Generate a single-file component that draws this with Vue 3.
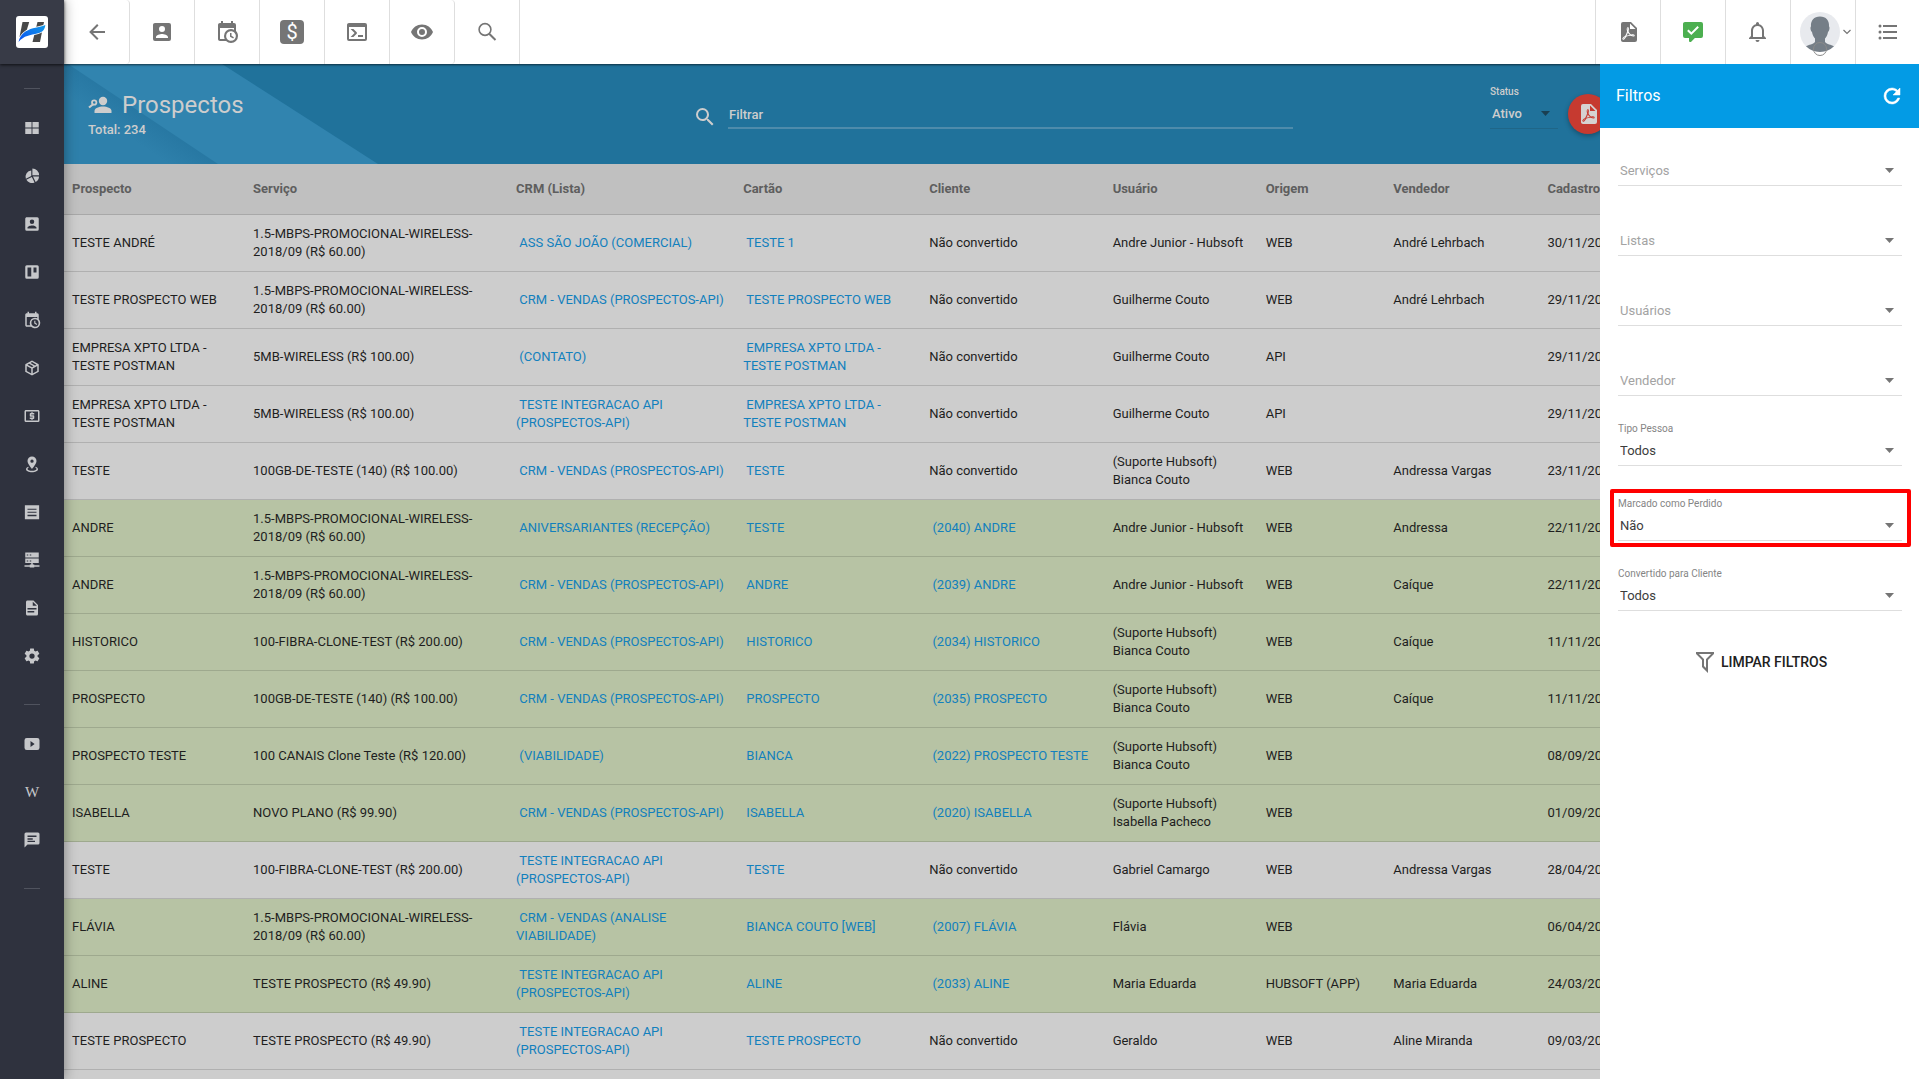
<script setup>
const icons = {
  back: 'M20,11V13H8L13.5,18.5L12.08,19.92L4.16,12L12.08,4.08L13.5,5.5L8,11H20Z',
  contact: 'M6,17C6,15 10,13.9 12,13.9C14,13.9 18,15 18,17V18H6M15,9A3,3 0 0,1 12,12A3,3 0 0,1 9,9A3,3 0 0,1 12,6A3,3 0 0,1 15,9M3,5V19A2,2 0 0,0 5,21H19A2,2 0 0,0 21,19V5A2,2 0 0,0 19,3H5C3.89,3 3,3.9 3,5Z',
  schedule: 'M15,13H16.5V15.82L18.94,17.23L18.19,18.53L15,16.69V13M19,8H5V19H9.67C9.24,18.09 9,17.07 9,16A7,7 0 0,1 16,9C17.07,9 18.09,9.24 19,9.67V8M5,21C3.89,21 3,20.1 3,19V5C3,3.89 3.89,3 5,3H6V1H8V3H16V1H18V3H19A2,2 0 0,1 21,5V11.1C22.24,12.36 23,14.09 23,16A7,7 0 0,1 16,23C14.09,23 12.36,22.24 11.1,21H5M16,11.15A4.85,4.85 0 0,0 11.15,16C11.15,18.68 13.32,20.85 16,20.85A4.85,4.85 0 0,0 20.85,16C20.85,13.32 18.68,11.15 16,11.15Z',
  console: 'M20,19V7H4V19H20M20,3A2,2 0 0,1 22,5V19A2,2 0 0,1 20,21H4A2,2 0 0,1 2,19V5C2,3.89 2.9,3 4,3H20M13,17V15H18V17H13M9.58,13L5.57,9H8.4L11.7,12.3C12.09,12.69 12.09,13.33 11.7,13.72L8.42,17H5.59L9.58,13Z',
  eye: 'M12,9A3,3 0 0,0 9,12A3,3 0 0,0 12,15A3,3 0 0,0 15,12A3,3 0 0,0 12,9M12,17A5,5 0 0,1 7,12A5,5 0 0,1 12,7A5,5 0 0,1 17,12A5,5 0 0,1 12,17M12,4.5C7,4.5 2.73,7.61 1,12C2.73,16.39 7,19.5 12,19.5C17,19.5 21.27,16.39 23,12C21.27,7.61 17,4.5 12,4.5Z',
  search: 'M9.5,3A6.5,6.5 0 0,1 16,9.5C16,11.11 15.41,12.59 14.44,13.73L14.71,14H15.5L20.5,19L19,20.5L14,15.5V14.71L13.73,14.44C12.59,15.41 11.11,16 9.5,16A6.5,6.5 0 0,1 3,9.5A6.5,6.5 0 0,1 9.5,3M9.5,5C7,5 5,7 5,9.5C5,12 7,14 9.5,14C12,14 14,12 14,9.5C14,7 12,5 9.5,5Z',
  pdf: 'M14,9H19.5L14,3.5V9M7,2H15L21,8V20A2,2 0 0,1 19,22H7C5.89,22 5,21.1 5,20V4A2,2 0 0,1 7,2M11.93,12.44C12.34,13.34 12.86,14.08 13.46,14.59L13.87,14.91C13,15.07 11.8,15.35 10.53,15.84V15.84L10.42,15.88L10.92,14.84C11.37,13.97 11.7,13.18 11.93,12.44M18.41,16.25C18.59,16.07 18.68,15.84 18.69,15.59C18.72,15.39 18.67,15.2 18.57,15.04C18.28,14.57 17.53,14.35 16.29,14.35L15,14.42L14.13,13.84C13.5,13.32 12.93,12.41 12.53,11.28L12.57,11.14C12.9,9.81 13.21,8.2 12.55,7.54C12.39,7.38 12.17,7.3 11.94,7.3H11.7C11.33,7.3 11,7.69 10.91,8.07C10.54,9.4 10.76,10.13 11.13,11.34V11.35C10.88,12.23 10.56,13.25 10.05,14.28L9.09,16.08L8.2,16.57C7,17.32 6.43,18.16 6.32,18.69C6.28,18.88 6.3,19.05 6.37,19.23L6.4,19.28L6.88,19.59L7.32,19.7C8.13,19.7 9.05,18.75 10.29,16.63L10.47,16.56C11.5,16.23 12.78,16 14.5,15.81C15.53,16.32 16.74,16.55 17.5,16.55C17.94,16.55 18.24,16.44 18.41,16.25M18,15.54L18.09,15.65C18.08,15.75 18.05,15.76 18,15.78H17.96L17.77,15.8C17.31,15.8 16.6,15.61 15.87,15.29C15.96,15.19 16,15.19 16.1,15.19C17.5,15.19 17.9,15.44 18,15.54M8.83,17C8.18,18.19 7.59,18.85 7.14,19C7.19,18.62 7.64,17.96 8.35,17.31L8.83,17M11.85,10.09C11.62,9.19 11.61,8.46 11.78,8.04L11.85,7.92L12,7.97C12.17,8.21 12.19,8.53 12.09,9.07L12.06,9.23L11.9,10.05L11.85,10.09Z',
  bell: 'M16,17H7V10.5C7,8 9,6 11.5,6C14,6 16,8 16,10.5M18,16V10.5C18,7.43 15.86,4.86 13,4.18V3.5A1.5,1.5 0 0,0 11.5,2A1.5,1.5 0 0,0 10,3.5V4.18C7.13,4.86 5,7.43 5,10.5V16L3,18V19H20V18M11.5,22A2,2 0 0,0 13.5,20H9.5A2,2 0 0,0 11.5,22Z',
  list: 'M7,5H21V7H7V5M7,13V11H21V13H7M4,4.5A1.5,1.5 0 0,1 5.5,6A1.5,1.5 0 0,1 4,7.5A1.5,1.5 0 0,1 2.5,6A1.5,1.5 0 0,1 4,4.5M4,10.5A1.5,1.5 0 0,1 5.5,12A1.5,1.5 0 0,1 4,13.5A1.5,1.5 0 0,1 2.5,12A1.5,1.5 0 0,1 4,10.5M7,19V17H21V19H7M4,16.5A1.5,1.5 0 0,1 5.5,18A1.5,1.5 0 0,1 4,19.5A1.5,1.5 0 0,1 2.5,18A1.5,1.5 0 0,1 4,16.5Z',
  refresh: 'M17.65,6.35C16.2,4.9 14.21,4 12,4A8,8 0 0,0 4,12A8,8 0 0,0 12,20C15.73,20 18.84,17.45 19.73,14H17.65C16.83,16.33 14.61,18 12,18A6,6 0 0,1 6,12A6,6 0 0,1 12,6C13.66,6 15.14,6.69 16.22,7.78L13,11H20V4L17.65,6.35Z',
  filter: 'M3,2H21V4H20.92L15,9.92V22.91L9,16.91V9.91L3.09,4H3V2M11,16.08L13,18.08V9H13.09L18.09,4H5.92L10.92,9H11V16.08Z',
  comment: 'M9,22A1,1 0 0,1 8,21V18H4A2,2 0 0,1 2,16V4C2,2.89 2.9,2 4,2H20A2,2 0 0,1 22,4V16A2,2 0 0,1 20,18H13.9L10.2,21.71C10,21.9 9.75,22 9.5,22V22H9Z',
  grid: 'M3,4H11.4V11.4H3ZM12.6,4H21V11.4H12.6ZM3,12.6H11.4V20H3ZM12.6,12.6H21V20H12.6Z',
  chart: 'M12.5,2A9,9 0 0,1 21.5,11H12.5ZM11,4.5V12L3.8,15.5A8.5,8.5 0 0,1 11,4.5ZM4.5,17L11.8,13.4L15.4,20.6A8.5,8.5 0 0,1 4.5,17ZM13.3,12.5H21.3A8.5,8.5 0 0,1 16.8,20Z',
  board: 'M5,3H19A2,2 0 0,1 21,5V19A2,2 0 0,1 19,21H5A2,2 0 0,1 3,19V5A2,2 0 0,1 5,3M6,6V18H11V6H6M14,6V12.5H18V6H14Z',
  box: 'M21,16.5C21,16.88 20.79,17.21 20.47,17.38L12.57,21.82C12.41,21.94 12.21,22 12,22C11.79,22 11.59,21.94 11.43,21.82L3.53,17.38C3.21,17.21 3,16.88 3,16.5V7.5C3,7.12 3.21,6.79 3.53,6.62L11.43,2.18C11.59,2.06 11.79,2 12,2C12.21,2 12.41,2.06 12.57,2.18L20.47,6.62C20.79,6.79 21,7.12 21,7.5V16.5M12,4.15L10.11,5.22L16,8.61L17.96,7.5L12,4.15M6.04,7.5L12,10.85L13.96,9.75L8.08,6.35L6.04,7.5M5,15.91L11,19.29V12.58L5,9.21V15.91M19,15.91V9.21L13,12.58V19.29L19,15.91Z',
  cash: 'M20,18H4V6H20M20,4H4C2.89,4 2,4.89 2,6V18A2,2 0 0,0 4,20H20A2,2 0 0,0 22,18V6C22,4.89 21.1,4 20,4M11,17H13V16H14A1,1 0 0,0 15,15V12A1,1 0 0,0 14,11H11V10H15V8H13V7H11V8H10A1,1 0 0,0 9,9V12A1,1 0 0,0 10,13H13V14H9V16H11V17Z',
  pin: 'M12,2A6,6 0 0,1 18,8C18,12 12,18.5 12,18.5C12,18.5 6,12 6,8A6,6 0 0,1 12,2M12,6A2.2,2.2 0 1,0 12,10.4A2.2,2.2 0 1,0 12,6M20,19C20,21.2 16.4,23 12,23C7.6,23 4,21.2 4,19C4,17.7 5.2,16.6 7.1,15.8L7.7,16.7C6.7,17.2 6,17.8 6,18.5C6,19.9 8.7,21 12,21C15.3,21 18,19.9 18,18.5C18,17.8 17.3,17.2 16.3,16.7L16.9,15.8C18.8,16.6 20,17.7 20,19Z',
  note: 'M2.5,3H21.5V21.5H2.5ZM6,7.5V9H18V7.5ZM6,11.5V13H18V11.5ZM6,15.5V17.5H18V15.5Z',
  server: 'M3,2H21V8.5H3ZM5,4.5V6H7V4.5ZM9,4.5V6H11V4.5ZM3,10H21V16H3ZM5,12.5V14H7V12.5ZM9,12.5V14H11V12.5ZM11,16H13V18H15V19H22V21H15V22H9V21H2V19H9V18H11Z',
  file: 'M13,9H18.5L13,3.5V9M6,2H14L20,8V20A2,2 0 0,1 18,22H6C4.89,22 4,21.1 4,20V4C4,2.89 4.89,2 6,2M15,18V16H6V18H15M18,14V12H6V14H18Z',
  cog: 'M12,15.5A3.5,3.5 0 0,1 8.5,12A3.5,3.5 0 0,1 12,8.5A3.5,3.5 0 0,1 15.5,12A3.5,3.5 0 0,1 12,15.5M19.43,12.97C19.47,12.65 19.5,12.33 19.5,12C19.5,11.67 19.47,11.34 19.43,11L21.54,9.37C21.73,9.22 21.78,8.95 21.66,8.73L19.66,5.27C19.54,5.05 19.27,4.96 19.05,5.05L16.56,6.05C16.04,5.66 15.5,5.32 14.87,5.07L14.5,2.42C14.46,2.18 14.25,2 14,2H10C9.75,2 9.54,2.18 9.5,2.42L9.13,5.07C8.5,5.32 7.96,5.66 7.44,6.05L4.95,5.05C4.73,4.96 4.46,5.05 4.34,5.27L2.34,8.73C2.21,8.95 2.27,9.22 2.46,9.37L4.57,11C4.53,11.34 4.5,11.67 4.5,12C4.5,12.33 4.53,12.65 4.57,12.97L2.46,14.63C2.27,14.78 2.21,15.05 2.34,15.27L4.34,18.73C4.46,18.95 4.73,19.03 4.95,18.95L7.44,17.94C7.96,18.34 8.5,18.68 9.13,18.93L9.5,21.58C9.54,21.82 9.75,22 10,22H14C14.25,22 14.46,21.82 14.5,21.58L14.87,18.93C15.5,18.67 16.04,18.34 16.56,17.94L19.05,18.95C19.27,19.03 19.54,18.95 19.66,18.73L21.66,15.27C21.78,15.05 21.73,14.78 21.54,14.63L19.43,12.97Z',
  video: 'M5,4H19A3,3 0 0,1 22,7V17A3,3 0 0,1 19,20H5A3,3 0 0,1 2,17V7A3,3 0 0,1 5,4M10,8V16L15.5,12Z',
  chat: 'M4,2H20A2,2 0 0,1 22,4V16A2,2 0 0,1 20,18H6L2,22V4A2,2 0 0,1 4,2M6,6V8H18V6ZM6,9.5V11.5H13V9.5ZM6,13V14.5H16V13Z'
}

const menuMain = [
  ['Painel', 'grid'], ['Relatórios', 'chart'], ['Clientes', 'contact'], ['CRM', 'board'],
  ['Agenda', 'schedule'], ['Estoque', 'box'], ['Financeiro', 'cash'], ['Mapa', 'pin'],
  ['Fiscal', 'note'], ['Rede', 'server'], ['Documentos', 'file'], ['Configurações', 'cog']
]

const columns = ['Prospecto', 'Serviço', 'CRM (Lista)', 'Cartão', 'Cliente', 'Usuário', 'Origem', 'Vendedor', 'Cadastro']

const mbps = '1.5-MBPS-PROMOCIONAL-WIRELESS-2018/09 (R$ 60.00)'
const api = 'CRM - VENDAS (PROSPECTOS-API)'
const integ = 'TESTE INTEGRACAO API (PROSPECTOS-API)'
const none = 'Não convertido'
const bianca = '(Suporte Hubsoft) Bianca Couto'
const empresa = 'EMPRESA XPTO LTDA - TESTE POSTMAN'

const rows = [
  ['TESTE ANDRÉ', mbps, 'ASS SÃO JOÃO (COMERCIAL)', 'TESTE 1', none, 'Andre Junior - Hubsoft', 'WEB', 'André Lehrbach', '30/11/2022'],
  ['TESTE PROSPECTO WEB', mbps, api, 'TESTE PROSPECTO WEB', none, 'Guilherme Couto', 'WEB', 'André Lehrbach', '29/11/2022'],
  [empresa, '5MB-WIRELESS (R$ 100.00)', '(CONTATO)', empresa, none, 'Guilherme Couto', 'API', '', '29/11/2022'],
  [empresa, '5MB-WIRELESS (R$ 100.00)', integ, empresa, none, 'Guilherme Couto', 'API', '', '29/11/2022'],
  ['TESTE', '100GB-DE-TESTE (140) (R$ 100.00)', api, 'TESTE', none, bianca, 'WEB', 'Andressa Vargas', '23/11/2022'],
  ['ANDRE', mbps, 'ANIVERSARIANTES (RECEPÇÃO)', 'TESTE', '(2040) ANDRE', 'Andre Junior - Hubsoft', 'WEB', 'Andressa', '22/11/2022'],
  ['ANDRE', mbps, api, 'ANDRE', '(2039) ANDRE', 'Andre Junior - Hubsoft', 'WEB', 'Caíque', '22/11/2022'],
  ['HISTORICO', '100-FIBRA-CLONE-TEST (R$ 200.00)', api, 'HISTORICO', '(2034) HISTORICO', bianca, 'WEB', 'Caíque', '11/11/2022'],
  ['PROSPECTO', '100GB-DE-TESTE (140) (R$ 100.00)', api, 'PROSPECTO', '(2035) PROSPECTO', bianca, 'WEB', 'Caíque', '11/11/2022'],
  ['PROSPECTO TESTE', '100 CANAIS Clone Teste (R$ 120.00)', '(VIABILIDADE)', 'BIANCA', '(2022) PROSPECTO TESTE', bianca, 'WEB', '', '08/09/2022'],
  ['ISABELLA', 'NOVO PLANO (R$ 99.90)', api, 'ISABELLA', '(2020) ISABELLA', '(Suporte Hubsoft) Isabella Pacheco', 'WEB', '', '01/09/2022'],
  ['TESTE', '100-FIBRA-CLONE-TEST (R$ 200.00)', integ, 'TESTE', none, 'Gabriel Camargo', 'WEB', 'Andressa Vargas', '28/04/2022'],
  ['FLÁVIA', mbps, 'CRM - VENDAS (ANALISE VIABILIDADE)', 'BIANCA COUTO [WEB]', '(2007) FLÁVIA', 'Flávia', 'WEB', '', '06/04/2022'],
  ['ALINE', 'TESTE PROSPECTO (R$ 49.90)', integ, 'ALINE', '(2033) ALINE', 'Maria Eduarda', 'HUBSOFT (APP)', 'Maria Eduarda', '24/03/2022'],
  ['TESTE PROSPECTO', 'TESTE PROSPECTO (R$ 49.90)', integ, 'TESTE PROSPECTO', none, 'Geraldo', 'WEB', 'Aline Miranda', '09/03/2022'],
  ['', '', '', '', '', '', '', '', '']
]

const converted = (row) => row[4].startsWith('(')
const isLink = (row, i) => row[i] && (i === 2 || i === 3 || (i === 4 && converted(row)))

const filters = [
  { id: 'servicos', hint: 'Serviços' },
  { id: 'listas', hint: 'Listas' },
  { id: 'usuarios', hint: 'Usuários' },
  { id: 'vendedor', hint: 'Vendedor' },
  { id: 'pessoa', label: 'Tipo Pessoa', value: 'Todos' },
  { id: 'perdido', label: 'Marcado como Perdido', value: 'Não', marked: true },
  { id: 'convertido', label: 'Convertido para Cliente', value: 'Todos' }
]
</script>

<template>
  <div class="app">
    <aside class="rail">
      <a class="logo" href="#" aria-label="Início">
        <svg width="32" height="32" viewBox="0 0 32 32">
          <defs>
            <linearGradient id="swoosh" x1="0" y1="1" x2="1" y2="0">
              <stop offset="0" stop-color="#0a4ff0" />
              <stop offset="1" stop-color="#129ae8" />
            </linearGradient>
          </defs>
          <rect width="32" height="32" rx="3" fill="#fff" />
          <path d="M6.500 6H13.200L10.500 15L3.500 21Z" fill="#484848" />
          <path d="M21.500 6H28L24 26H16.500Z" fill="#484848" />
          <path d="M2.500 26C4.500 17.500 10 14.500 17 12.300C22 10.800 26 10.800 29.300 9C29 13 27 16 22 17.300C14 19.300 8 19.500 2.500 26Z" fill="#fff" stroke="#fff" stroke-width="1.500" />
          <path d="M2.500 26C4.500 17.500 10 14.500 17 12.300C22 10.800 26 10.800 29.300 9C29 13 27 16 22 17.300C14 19.300 8 19.500 2.500 26Z" fill="url(#swoosh)" />
        </svg>
      </a>
      <nav class="menu">
        <hr>
        <a v-for="[name, icon] in menuMain" :key="name" href="#" :aria-label="name">
          <svg width="18" height="18" viewBox="0 0 24 24"><path fill-rule="evenodd" :d="icons[icon]" /></svg>
        </a>
        <hr>
        <a href="#" aria-label="Vídeos"><svg width="18" height="18" viewBox="0 0 24 24"><path fill-rule="evenodd" :d="icons.video" /></svg></a>
        <a href="#" class="wiki">W</a>
        <a href="#" aria-label="Mensagens"><svg width="18" height="18" viewBox="0 0 24 24"><path fill-rule="evenodd" :d="icons.chat" /></svg></a>
        <hr>
      </nav>
    </aside>

    <header class="topbar">
      <button type="button" class="tool rounded" aria-label="Voltar"><svg width="24" height="24" viewBox="0 0 24 24"><path :d="icons.back" /></svg></button>
      <button type="button" class="tool" aria-label="Clientes"><svg width="24" height="24" viewBox="0 0 24 24"><path :d="icons.contact" /></svg></button>
      <button type="button" class="tool" aria-label="Agenda"><svg width="24" height="24" viewBox="0 0 24 24"><path :d="icons.schedule" /></svg></button>
      <button type="button" class="tool"><span class="money">$</span></button>
      <button type="button" class="tool" aria-label="Console"><svg width="24" height="24" viewBox="0 0 24 24"><path :d="icons.console" /></svg></button>
      <button type="button" class="tool rounded" aria-label="Visualizar"><svg width="24" height="24" viewBox="0 0 24 24"><path :d="icons.eye" /></svg></button>
      <button type="button" class="tool" aria-label="Pesquisar">
        <svg width="24" height="24" viewBox="0 0 24 24"><g fill="none" stroke="#757575" stroke-width="1.600"><circle cx="10" cy="9.500" r="5.900" /><path d="M14.200 13.800L20.500 20" stroke-width="2" /></g></svg>
      </button>
      <div class="tools-right">
        <button type="button" class="tool" aria-label="Relatório PDF"><svg width="24" height="24" viewBox="0 0 24 24"><path :d="icons.pdf" /></svg></button>
        <button type="button" class="tool" aria-label="Tarefas">
          <svg width="24" height="24" viewBox="0 0 24 24"><path fill="#4caf50" :d="icons.comment" /><path d="M6.800 10.300L10.300 13.600L17.200 6.800" fill="none" stroke="#fff" stroke-width="2" /></svg>
        </button>
        <button type="button" class="tool" aria-label="Notificações"><svg width="24" height="24" viewBox="0 0 24 24"><path :d="icons.bell" /></svg></button>
        <button type="button" class="tool user" aria-label="Usuário">
          <svg class="avatar" width="40" height="40" viewBox="0 0 40 40">
            <circle cx="20" cy="20" r="20" fill="#e8eaee" />
            <path d="M20 4.500C26 4.500 29.500 8.500 29 14.500C30 15 29.500 19 28 20C27.500 23 26.500 25 25 26.500V30C27 32.500 31 32.500 34 34.200A20 20 0 0 1 6 34.200C9 32.500 13 32.500 15 30V26.500C13.500 25 12.500 23 12 20C10.500 19 10 15 11 14.500C10.500 8.500 14 4.500 20 4.500Z" fill="#757e87" />
            <path d="M14.500 40H25.500A6 6 0 0 1 14.500 40Z" fill="#fff" />
            <circle cx="20" cy="37" r="6.500" fill="none" stroke="#8a8a8a" />
          </svg>
          <svg width="8" height="6" viewBox="0 0 8 6"><path d="M0.500 1L4 4.500L7.500 1" fill="none" stroke="#757575" stroke-width="1.200" /></svg>
        </button>
        <button type="button" class="tool last" aria-label="Painel rápido"><svg width="24" height="24" viewBox="0 0 24 24"><path :d="icons.list" /></svg></button>
      </div>
    </header>

    <main class="content">
      <section class="banner">
        <svg class="rays" width="340" height="100" viewBox="0 0 340 100" aria-hidden="true">
          <defs>
            <linearGradient id="low" gradientUnits="userSpaceOnUse" x1="60" y1="70" x2="79" y2="42">
              <stop offset="0" stop-color="#2e80ab" />
              <stop offset="1" stop-color="#2676a1" />
            </linearGradient>
          </defs>
          <path d="M0 0H158L314 100H0Z" fill="#3184af" />
          <path d="M0 0H4L154 100H0Z" fill="url(#low)" />
        </svg>
        <div class="heading">
          <h1>
            <svg width="24" height="24" viewBox="0 0 24 24" fill="#cdcdcd">
              <circle cx="15" cy="8" r="4.200" />
              <path d="M6.500 20V18C6.500 15 11 13.500 15 13.500S23.500 15 23.500 18V20Z" />
              <path d="M1 14.500L5.500 11" stroke="#cdcdcd" stroke-width="2.200" />
              <circle cx="6.200" cy="9.500" r="2.200" fill="none" stroke="#cdcdcd" stroke-width="1.800" />
            </svg>
            Prospectos
          </h1>
          <p>Total: 234</p>
        </div>
        <div class="search">
          <svg width="24" height="24" viewBox="0 0 24 24"><path fill="#cdcdcd" :d="icons.search" /></svg>
          <input type="text" placeholder="Filtrar" aria-label="Filtrar">
        </div>
        <div class="actions">
          <div class="status">
            <label for="status">Status</label>
            <div class="picker">
              <select id="status"><option>Ativo</option></select>
              <svg width="9" height="5" viewBox="0 0 9 5"><path d="M0 0H9L4.500 5Z" fill="#1a3f52" /></svg>
            </div>
          </div>
          <button type="button" class="fab" aria-label="Exportar PDF"><svg width="24" height="24" viewBox="0 0 24 24"><path :d="icons.pdf" /></svg></button>
        </div>
      </section>

      <table>
        <thead>
          <tr><th v-for="(c, i) in columns" :key="c" :class="'c' + i">{{ c }}</th></tr>
        </thead>
        <tbody>
          <tr v-for="(row, r) in rows" :key="r" :class="{ converted: converted(row) }">
            <td v-for="(cell, i) in row" :key="i">
              <template v-if="isLink(row, i)">&nbsp;<a href="#">{{ cell }}</a></template>
              <template v-else>{{ cell }}</template>
            </td>
          </tr>
        </tbody>
      </table>
    </main>

    <section class="panel">
      <header>
        <h2>Filtros</h2>
        <button type="button" aria-label="Atualizar"><svg width="24" height="24" viewBox="0 0 24 24"><path :d="icons.refresh" fill="#fff" stroke="#fff" stroke-width="0.500" /></svg></button>
      </header>
      <form>
        <div v-for="f in filters" :key="f.id" class="field" :class="{ marked: f.marked }">
          <label v-if="f.label" :for="f.id">{{ f.label }}</label>
          <div class="picker">
            <select :id="f.id" :class="{ hint: f.hint }" :aria-label="f.hint"><option>{{ f.hint || f.value }}</option></select>
            <svg width="9" height="5" viewBox="0 0 9 5"><path d="M0 0H9L4.500 5Z" fill="#757575" /></svg>
          </div>
        </div>
        <button type="button" class="clear">
          <svg width="24" height="24" viewBox="0 0 24 24"><path :d="icons.filter" /></svg>
          LIMPAR FILTROS
        </button>
      </form>
    </section>
  </div>
</template>

<style>
body { margin: 0; overflow: hidden; }
</style>

<style scoped>
.app {
  position: relative;
  display: grid;
  grid-template: 64px 1fr / 64px 1fr;
  height: 100vh;
  overflow: hidden;
  background: #cdcdcd;
  font: 13px/18px Roboto, sans-serif;
  color: #1e1e1e;
}
* { box-sizing: border-box; }
svg { display: block; flex: none; }
a { text-decoration: none; }
button { border: 0; padding: 0; background: none; font: inherit; color: inherit; }
select, input { appearance: none; border: 0; border-radius: 0; outline: 0; background: none; font: inherit; color: inherit; }

.rail {
  grid-row: 1 / 3;
  z-index: 3;
  background: #2f323e;
  box-shadow: 0 0 12px rgba(0, 0, 0, .4);
}
.logo {
  display: grid;
  place-items: center;
  height: 64px;
  background: #383b47;
  box-shadow: 0 1px 3px rgba(0, 0, 0, .7);
}
.menu { display: flex; flex-direction: column; align-items: center; }
.menu hr { width: 16px; height: 1px; margin: 24px 0 15px; border: 0; background: #50535e; }
.menu a { display: grid; place-items: center; width: 64px; height: 48px; color: #c6c7ca; fill: #c6c7ca; }
.menu .wiki { font: 15px/20px "Liberation Serif", serif; }

.topbar {
  z-index: 2;
  display: flex;
  padding-left: 1px;
  background: #fff;
  box-shadow: 0 1px 2px rgba(0, 0, 0, .6);
}
.tool {
  display: grid;
  place-items: center;
  width: 65px;
  height: 64px;
  border-right: 1px solid #dedede;
  fill: #757575;
}
.tool.rounded { border-radius: 0 4px 4px 0; }
.money {
  width: 24px;
  height: 24px;
  border-radius: 4px;
  background: #757575;
  color: #fff;
  font-size: 20px;
  line-height: 24px;
}
.tools-right { display: flex; margin-left: auto; border-left: 1px solid #dedede; }
.tool.user { display: flex; align-items: center; justify-content: flex-end; gap: 3px; padding-right: 4px; }
.tool.last { width: 63px; border-right: 0; }
.avatar { overflow: visible; }

.content { min-width: 0; overflow: hidden; }
.banner {
  position: relative;
  display: grid;
  grid-template-columns: 631fr 598fr 626fr;
  height: 100px;
  background: #20729b;
  color: #cdcdcd;
}
.rays { position: absolute; inset: 0 auto auto 0; }
.heading { position: relative; padding: 25px 24px 0; }
h1 { display: flex; align-items: center; gap: 10px; margin: 0; font-size: 24px; line-height: 32px; font-weight: 400; }
.heading p { margin: 0; font-weight: 500; }
.search { display: flex; align-items: flex-end; gap: 11px; height: 65px; margin-left: -2px; }
.search input {
  flex: 1;
  min-width: 0;
  height: 29px;
  padding: 2px 1px 0;
  border-bottom: 2px solid #4e8bab;
  font-weight: 500;
}
.search input::placeholder { color: #cdcdcd; opacity: 1; }
.actions { display: flex; gap: 10px; padding: 19px 0 0 197px; }
.status { width: 68px; font-weight: 500; }
.status label, .field label { display: block; font-size: 10px; line-height: 15px; }
.status label { padding-top: 1px; }
.picker { position: relative; }
.picker select { display: block; width: 100%; height: 30px; padding: 1px 2px 0; border-bottom: 1px solid #dedede; }
.picker svg { position: absolute; right: 8px; top: 12px; }
.status .picker select { border-color: #1f6688; font-weight: 500; }
.fab {
  display: grid;
  place-items: center;
  width: 40px;
  height: 40px;
  margin-top: 11px;
  border-radius: 50%;
  background: #c63a30;
  box-shadow: 0 2px 5px rgba(0, 0, 0, .3);
  fill: #d6d2d1;
}

table { width: 100%; table-layout: fixed; border-collapse: separate; border-spacing: 0; }
th, td { border-bottom: 1px solid #b0b0b0; text-align: left; vertical-align: middle; }
th { height: 51px; padding: 0 8px; background: #c0c0c0; border-color: #a8a8a8; color: #5e5e5e; font-weight: 700; }
td { height: 57px; padding: 0 8px; }
td a { color: #1280bd; }
.converted td { background: #b7c3a4; border-color: #9ea98e; }
.c0 { width: 9.76%; }
.c1 { width: 14.18%; }
.c2 { width: 12.24%; }
.c3 { width: 10.03%; }
.c4 { width: 9.89%; }
.c5 { width: 8.25%; }
.c6 { width: 6.88%; }
.c7 { width: 8.31%; }

.panel {
  position: absolute;
  z-index: 4;
  top: 64px;
  right: 0;
  bottom: 0;
  width: 319px;
  background: #fff;
  color: #3c3c3c;
}
.panel header {
  display: flex;
  align-items: center;
  justify-content: space-between;
  height: 64px;
  padding: 0 15px 0 16px;
  background: #039be5;
  color: #fff;
}
h2 { margin: 0; font-size: 16px; font-weight: 400; }
form { display: flex; flex-direction: column; gap: 25px; padding: 13px 17px 0 18px; }
.field { display: flex; flex-direction: column; justify-content: flex-end; min-height: 45px; position: relative; }
.field label { color: #858585; }
.field .hint { color: #a3a3a3; }
.marked { margin-top: 5px; }
.marked::after {
  content: "";
  position: absolute;
  inset: -7px -9px -6px -8px;
  border: 4px solid #f00;
  border-radius: 2px;
  pointer-events: none;
}
.clear {
  display: flex;
  align-items: center;
  align-self: center;
  gap: 4px;
  height: 36px;
  margin: 8px 0;
  font-size: 14px;
  font-weight: 500;
  color: #212121;
  fill: #757575;
}
</style>
